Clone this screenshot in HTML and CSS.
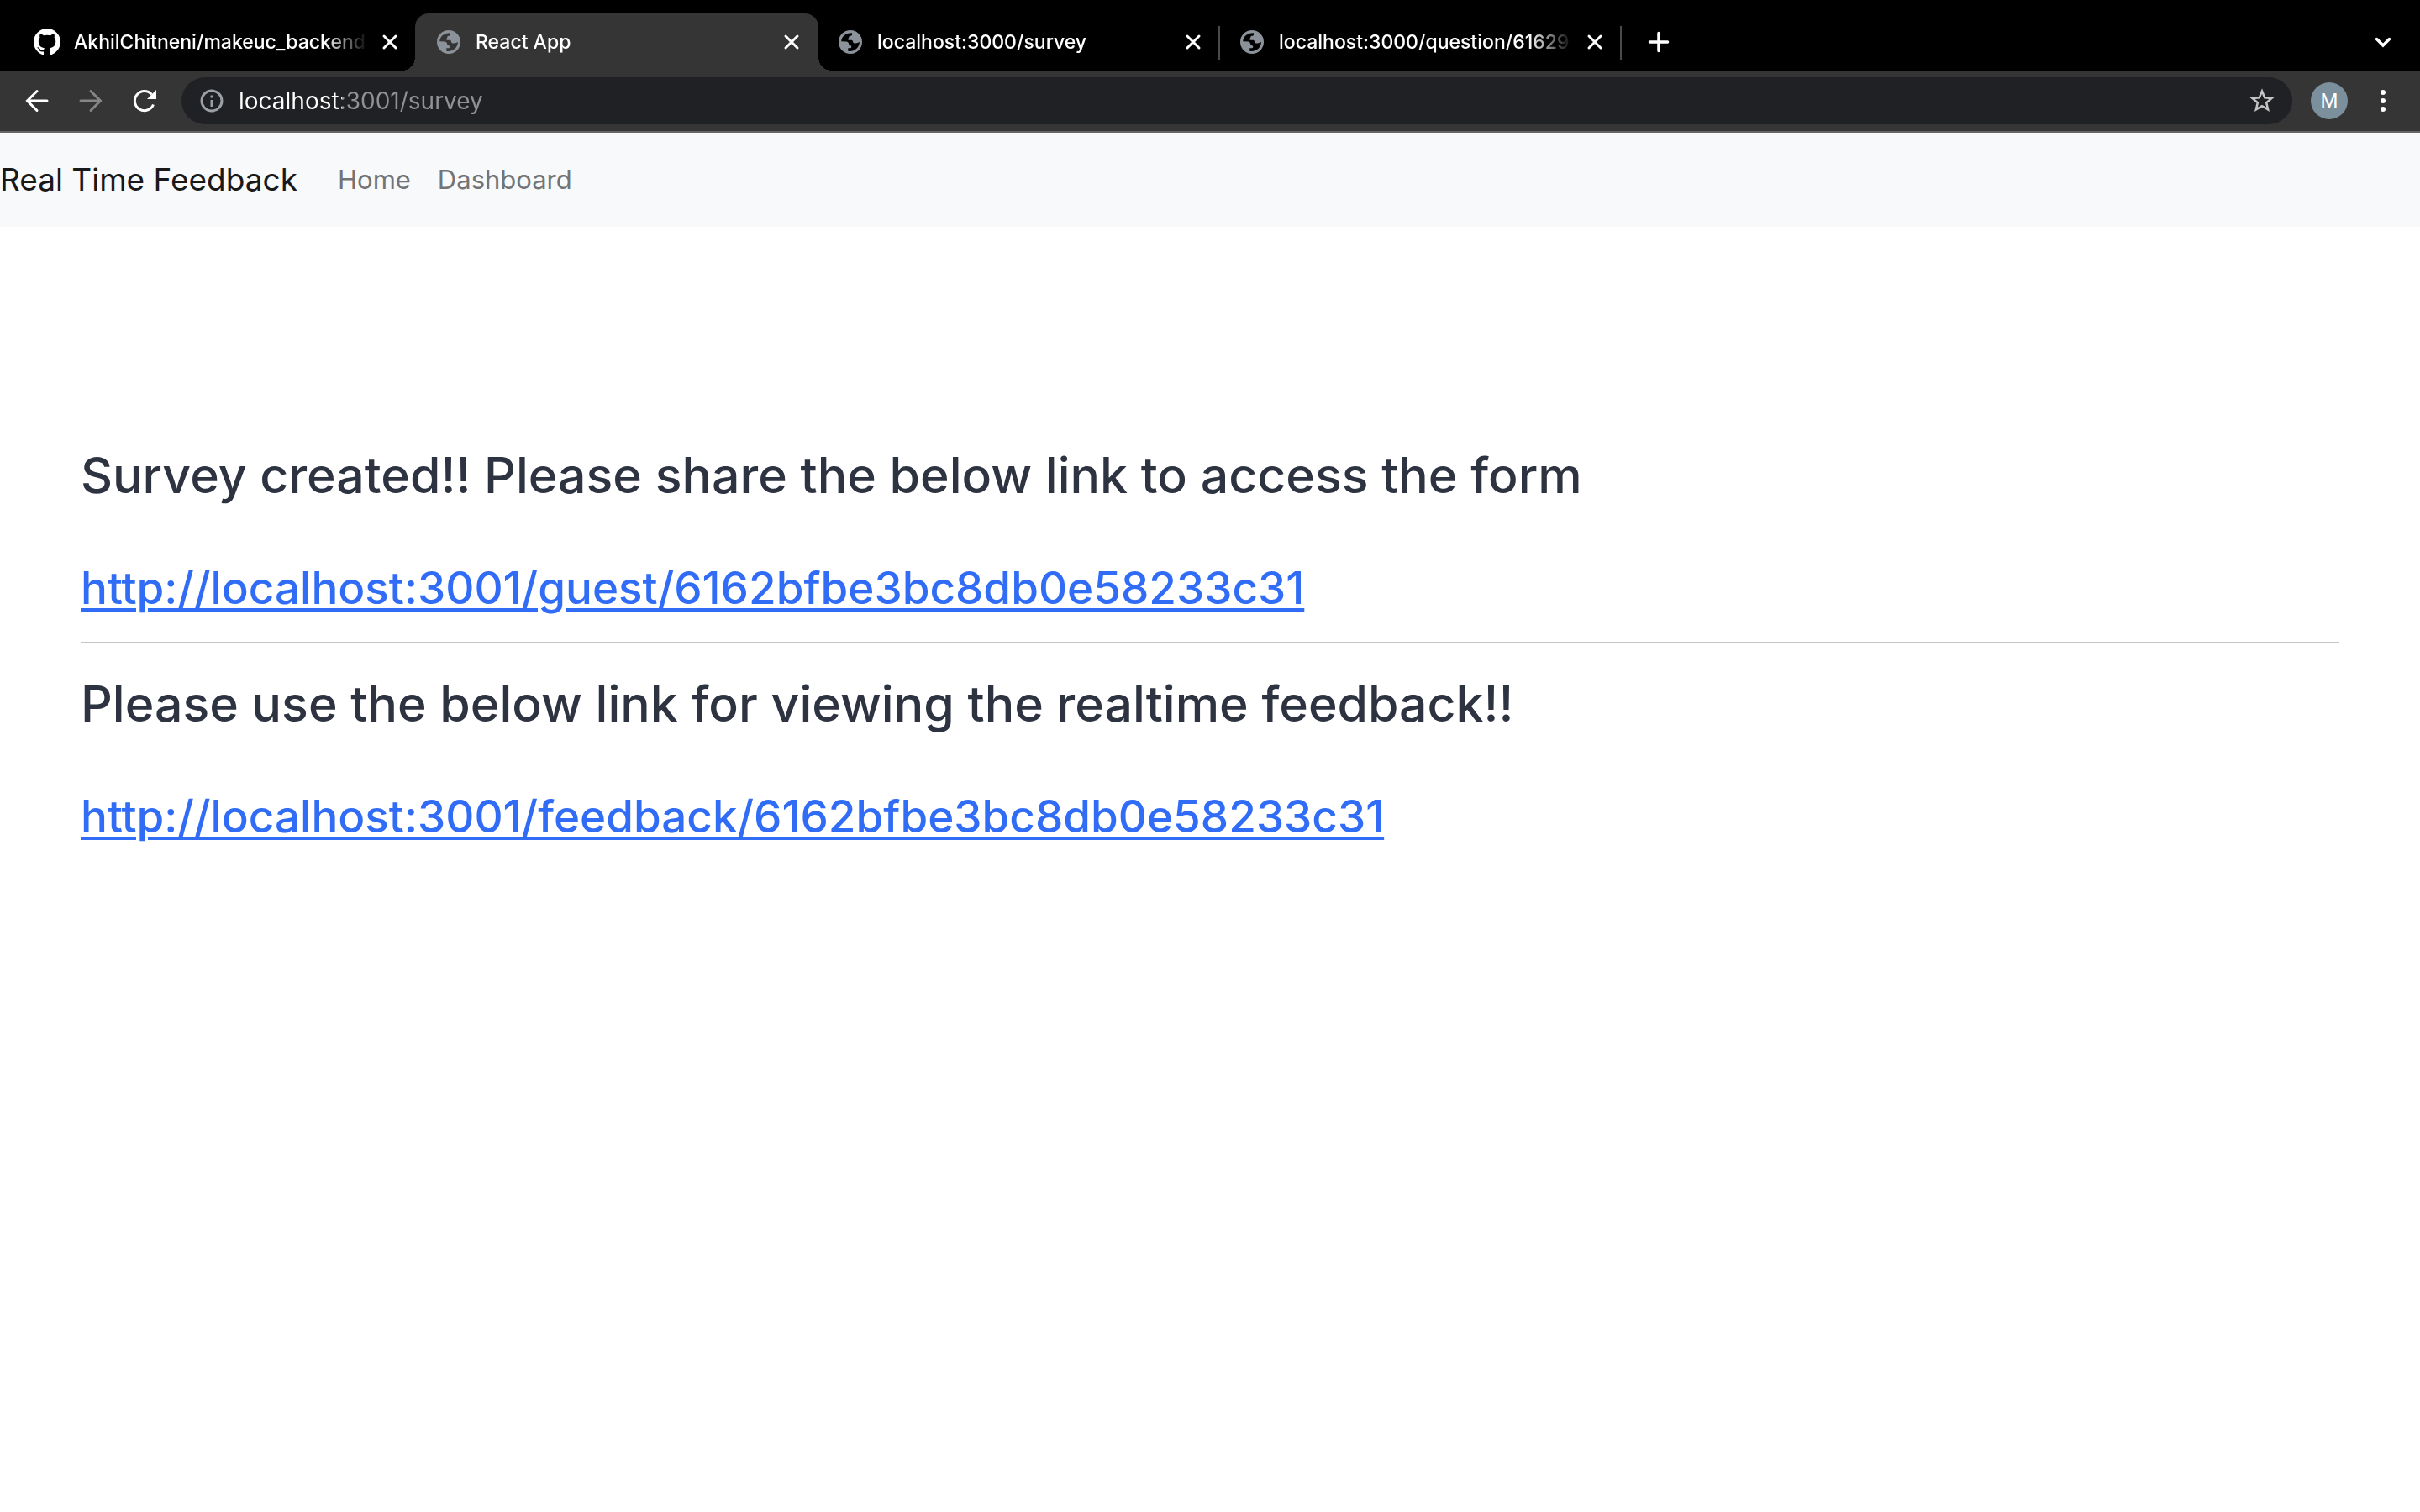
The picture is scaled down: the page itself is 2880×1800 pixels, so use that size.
FILE: index.html
```html
<!DOCTYPE html>
<html lang="en">

<head>
    <meta charset="UTF-8">
    <meta name="viewport" content="width=device-width, initial-scale=1.0">
    <title>React App</title>
    <link rel="stylesheet" href="styles.css">
</head>

<body>
    <!-- shared icon shapes -->
    <svg class="sprite" aria-hidden="true">
        <symbol id="globe" viewBox="0 0 28 28">
            <path fill="#8b9299" fill-rule="evenodd" d="M0 14a14 14 0 1 0 28 0a14 14 0 1 0-28 0zM3.200 13.300C3.500 7.500 8.500 3.200 16 3.300V5.300c0 1.300-1 1.500-2.300 1.500-1.500 0-1.200 1-1.400 2-.2 1-1.300.8-1.300 1.700 0 1 .8 1.200 2 1.200h2.500c1.200 0 1.300 1 1.500 2 .3 1.500 1.500 1.700 3 1.700 2 0 3.500-.5 4.900-1.700C25 20.500 19 26 11.300 24.800V21.300H13.500c1.300 0 1.800-.7 1.800-1.500 0-1.300-.8-1.700-2-1.900-1-.2-1-.8-1.200-1.900-.3-1.600-1.300-2.500-3-2.600z"></path>
        </symbol>
        <symbol id="close" viewBox="0 0 32 32">
            <path d="M9 9l14 14M23 9L9 23" fill="none" stroke="currentColor" stroke-width="3" stroke-linecap="round"></path>
        </symbol>
    </svg>

    <header class="browser">
        <div class="tabs">
            <div class="tab">
                <svg class="icon" viewBox="0 0 16 16"><path fill="#fff" d="M8 0C3.580 0 0 3.580 0 8c0 3.540 2.290 6.530 5.470 7.590.4.070.55-.17.55-.38 0-.19-.01-.82-.01-1.490-2.010.37-2.530-.49-2.690-.94-.09-.23-.48-.94-.82-1.130-.28-.15-.68-.52-.01-.53.63-.01 1.080.58 1.230.82.72 1.210 1.870.87 2.330.66.070-.52.28-.87.51-1.070-1.780-.2-3.640-.89-3.640-3.950 0-.87.31-1.590.82-2.150-.08-.2-.36-1.020.08-2.120 0 0 .67-.21 2.200.82.64-.18 1.320-.27 2-.27s1.360.09 2 .27c1.530-1.040 2.200-.82 2.200-.82.44 1.100.16 1.920.08 2.120.51.56.82 1.270.82 2.150 0 3.070-1.870 3.750-3.650 3.950.29.25.54.73.54 1.480 0 1.070-.01 1.930-.01 2.200 0 .21.15.46.55.38A8.010 8.010 0 0 0 16 8c0-4.420-3.580-8-8-8z"></path></svg>
                <span class="title">AkhilChitneni/makeuc_backend</span>
                <button class="close" aria-label="Close tab"><svg class="icon"><use href="#close"></use></svg></button>
            </div>
            <div class="tab active">
                <svg class="icon globe"><use href="#globe"></use></svg>
                <span class="title">React App</span>
                <button class="close" aria-label="Close tab"><svg class="icon"><use href="#close"></use></svg></button>
            </div>
            <div class="tab line">
                <svg class="icon globe"><use href="#globe"></use></svg>
                <span class="title">localhost:3000/survey</span>
                <button class="close" aria-label="Close tab"><svg class="icon"><use href="#close"></use></svg></button>
            </div>
            <div class="tab line">
                <svg class="icon globe"><use href="#globe"></use></svg>
                <span class="title">localhost:3000/question/61629</span>
                <button class="close" aria-label="Close tab"><svg class="icon"><use href="#close"></use></svg></button>
            </div>
            <button class="new-tab" aria-label="New tab"><svg class="icon" viewBox="0 0 32 32"><path d="M16 5.500v21M5.500 16h21" fill="none" stroke="#fff" stroke-width="3.500" stroke-linecap="round"></path></svg></button>
            <button class="tab-search" aria-label="Search tabs"><svg class="icon" viewBox="0 0 32 32"><path d="M8.500 12.500L16 20l7.500-7.500" fill="none" stroke="#fff" stroke-width="3.500" stroke-linecap="round"></path></svg></button>
        </div>

        <div class="toolbar">
            <button aria-label="Back"><svg class="icon" viewBox="0 0 32 32"><path d="M28 16H5M16 4.500L4.500 16 16 27.500" fill="none" stroke="#fff" stroke-width="3" stroke-linecap="round"></path></svg></button>
            <button aria-label="Forward"><svg class="icon" viewBox="0 0 32 32"><path d="M4 16h23M16 4.500L27.500 16 16 27.500" fill="none" stroke="#868686" stroke-width="3" stroke-linecap="round"></path></svg></button>
            <button aria-label="Reload"><svg class="icon" viewBox="0 0 32 32"><path d="M26.500 20.500A11.500 11.500 0 1 1 24.500 8.500" fill="none" stroke="#fff" stroke-width="3"></path><path d="M30 3v11H19z" fill="#fff"></path></svg></button>
            <div class="omnibox">
                <svg class="icon" viewBox="0 0 32 32"><circle cx="16" cy="16" r="12" fill="none" stroke="#9aa0a6" stroke-width="3"></circle><path d="M16 15v8M16 9.500v3" stroke="#9aa0a6" stroke-width="3"></path></svg>
                <input class="url" type="text" value="localhost:3001/survey" aria-label="Address">
                <button aria-label="Bookmark this page"><svg class="icon" viewBox="0 0 32 32"><path d="M16 4.500l3.200 7.700 8.300.7-6.300 5.400 1.900 8.100L16 22.100l-7.100 4.300 1.900-8.100-6.300-5.400 8.300-.7z" fill="none" stroke="#c4c4c4" stroke-width="2.500"></path></svg></button>
            </div>
            <button class="avatar" aria-label="Profile">M</button>
            <button aria-label="Menu"><svg class="icon" viewBox="0 0 32 32"><g fill="#fff"><circle cx="16" cy="6" r="3"></circle><circle cx="16" cy="16" r="3"></circle><circle cx="16" cy="26" r="3"></circle></g></svg></button>
        </div>
    </header>

    <nav class="navbar">
        <a class="brand" href="#">Real Time Feedback</a>
        <a class="nav-link" href="#">Home</a>
        <a class="nav-link" href="#">Dashboard</a>
    </nav>

    <main class="content">
        <h1>Survey created!! Please share the below link to access the form</h1>
        <h2><a href="#">http://localhost:3001/guest/6162bfbe3bc8db0e58233c31</a></h2>
        <hr>
        <h1>Please use the below link for viewing the realtime feedback!!</h1>
        <h2><a href="#">http://localhost:3001/feedback/6162bfbe3bc8db0e58233c31</a></h2>
    </main>
</body>

</html>
```
FILE: styles.css
```css
* {
    box-sizing: border-box;
}

body,
h1,
h2 {
    margin: 0;
    padding: 0;
}

body {
    font-family: Inter, "Liberation Sans", sans-serif;
    background: #fff;
    color: #2d3340;
}

button {
    display: flex;
    flex: none;
    padding: 0;
    border: 0;
    background: none;
    color: #fff;
    cursor: pointer;
}

a {
    text-decoration: none;
}

.sprite {
    display: none;
}

.icon {
    display: block;
    flex: none;
    width: 32px;
    height: 32px;
}

.globe {
    padding: 2px;
}

/* tab strip */
.browser {
    background: #353535;
    border-bottom: 2px solid #676767;
}

.tabs {
    display: flex;
    align-items: center;
    height: 84px;
    padding: 16px 28px 0 16px;
    background: #000;
}

.tab {
    position: relative;
    display: flex;
    align-items: center;
    width: 478px;
    height: 68px;
    padding: 0 14px 0 24px;
    color: #fff;
}

.tab.active {
    width: 480px;
    margin-right: -2px;
    padding-right: 16px;
    background: #353535;
    border-radius: 16px 16px 0 0;
}

/* curved feet of the active tab */
.tab.active::before,
.tab.active::after {
    content: "";
    position: absolute;
    bottom: 0;
    width: 16px;
    height: 16px;
}

.tab.active::before {
    right: 100%;
    background: radial-gradient(circle at 0 0, #000 16px, #353535 16px);
}

.tab.active::after {
    left: 100%;
    background: radial-gradient(circle at 100% 0, #000 16px, #353535 16px);
}

.tab.line::after {
    content: "";
    position: absolute;
    right: -2px;
    top: 15px;
    width: 2px;
    height: 40px;
    background: #4a4a4a;
}

.title {
    flex: 1;
    margin: 0 10px 0 16px;
    overflow: hidden;
    white-space: nowrap;
    font-size: 23px;
    font-weight: 500;
    line-height: 32px;
    -webkit-mask-image: linear-gradient(to right, #000 85%, transparent);
    mask-image: linear-gradient(to right, #000 85%, transparent);
}

.new-tab {
    margin-left: 30px;
}

.tab-search {
    margin-left: auto;
}

/* address bar */
.toolbar {
    display: flex;
    align-items: center;
    gap: 32px;
    height: 72px;
    padding: 0 28px;
}

.omnibox {
    display: flex;
    flex: 1;
    align-items: center;
    height: 56px;
    margin: 0 -10px 0 -4px;
    padding: 0 20px;
    border-radius: 28px;
    background: #202124;
}

/* host is drawn bright, the rest of the address dim */
.url {
    flex: 1;
    margin: 0 16px;
    padding: 0;
    border: 0;
    outline: 0;
    font: 28px/36px Inter, "Liberation Sans", sans-serif;
    color: transparent;
    background: linear-gradient(to right, #fff 123px, #919293 123px);
    -webkit-background-clip: text;
    background-clip: text;
}

.avatar {
    align-items: center;
    justify-content: center;
    width: 44px;
    height: 44px;
    margin-right: -6px;
    border-radius: 50%;
    background: #7b8f9c;
    font: 24px/28px Roboto, sans-serif;
}

/* page */
.navbar {
    display: flex;
    align-items: center;
    padding: 16px 0;
    background: #f8f9fb;
}

.brand {
    margin-right: 32px;
    font-size: 37px;
    line-height: 60px;
    color: #191919;
}

.nav-link {
    padding: 16px;
    font-size: 31px;
    line-height: 48px;
    color: #737475;
}

.content {
    padding: 258px 96px;
}

h1 {
    font-size: 59px;
    font-weight: 500;
    line-height: 76px;
}

h2 {
    margin-top: 62px;
    font-size: 53px;
    font-weight: 500;
    line-height: 68px;
}

h2 a {
    color: #306cf6;
    text-decoration: underline;
    text-decoration-thickness: 4px;
    text-underline-offset: 5px;
}

hr {
    height: 2px;
    margin: 30px 0 34px;
    border: 0;
    background: #c4c4c4;
}
```
